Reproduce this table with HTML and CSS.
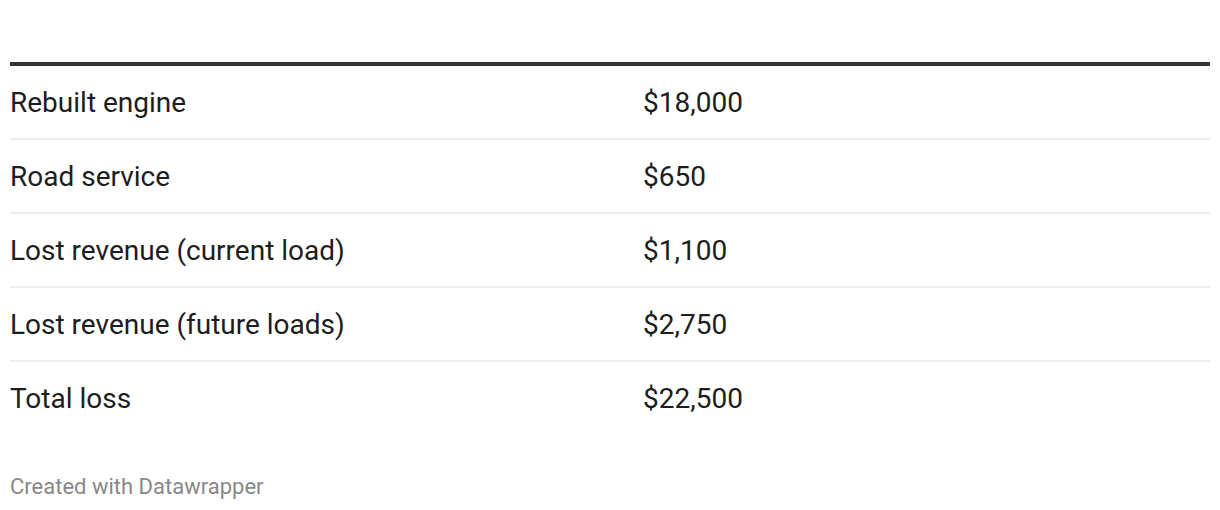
FILE: index.html
```html
<!DOCTYPE html>
<html>
<head>
<meta charset="utf-8">
<link rel="stylesheet" href="styles.css">
</head>
<body>
<div class="chart">
  <table class="tbl">
    <tbody>
      <tr><td class="c1">Rebuilt engine</td><td class="c2">$18,000</td></tr>
      <tr><td class="c1">Road service</td><td class="c2">$650</td></tr>
      <tr><td class="c1">Lost revenue (current load)</td><td class="c2">$1,100</td></tr>
      <tr><td class="c1">Lost revenue (future loads)</td><td class="c2">$2,750</td></tr>
      <tr class="last"><td class="c1">Total loss</td><td class="c2">$22,500</td></tr>
    </tbody>
  </table>
  <div class="footer">Created with Datawrapper</div>
</div>
</body>
</html>
```
FILE: styles.css
```css
html, body {
  margin: 0;
  padding: 0;
  background: #ffffff;
}
body {
  font-family: Roboto, "Liberation Sans", sans-serif;
  color: #1d1d1d;
}
.chart {
  padding: 62px 10px 0 10px;
  width: 1200px;
}
.tbl {
  width: 1200px;
  border-collapse: collapse;
  border-top: 4px solid #333333;
}
.tbl td {
  font-size: 28px;
  line-height: 32px;
  height: 71px;
  padding: 1px 0 0 0;
  vertical-align: middle;
  border-bottom: 2px solid #eeeeee;
}
.tbl tr.last td {
  border-bottom: none;
}
.c1 {
  width: 633px;
}
.footer {
  margin-top: 40px;
  font-size: 22px;
  line-height: 26px;
  color: #888888;
}
```
